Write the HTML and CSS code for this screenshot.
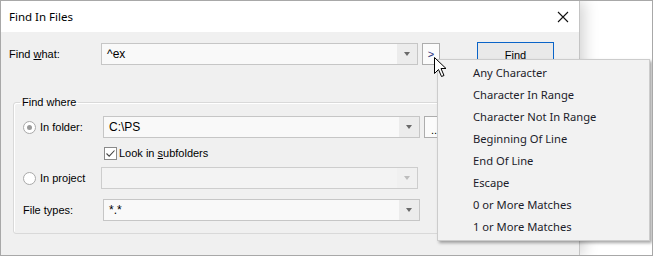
FILE: index.html
```html
<!DOCTYPE html>
<html lang="en">
<head>
    <meta charset="UTF-8">
    <title>Find In Files</title>
    <link rel="stylesheet" href="styles.css">
</head>
<body>
    <div class="screen">
        <div class="dialog">
            <div class="titlebar">
                <span class="title">Find In Files</span>
                <svg class="close" width="12" height="12" viewBox="0 0 12 12">
                    <path d="M1 1 L11 11 M11 1 L1 11" stroke="#111" stroke-width="1.1" fill="none"/>
                </svg>
            </div>

            <div class="content">
                <div class="find-row">
                    <label class="label">Find <u>w</u>hat:</label>
                    <div class="combo">
                        <span class="value">^ex</span>
                        <span class="arrow"></span>
                    </div>
                    <button class="small-btn regex">&gt;</button>
                    <button class="find-btn">Find</button>
                </div>

                <fieldset class="group">
                    <legend>Find where</legend>

                    <div class="row">
                        <span class="radio checked"></span>
                        <span class="row-label">In folder:</span>
                        <div class="combo">
                            <span class="value">C:\PS</span>
                            <span class="arrow"></span>
                        </div>
                        <button class="small-btn dots">...</button>
                    </div>

                    <div class="row check-row">
                        <span class="checkbox">
                            <svg width="11" height="11" viewBox="0 0 11 11">
                                <path d="M1.5 5.5 L4.2 8.2 L9.5 2.5" stroke="#444" stroke-width="1.1" fill="none"/>
                            </svg>
                        </span>
                        <span>Look in <u>s</u>ubfolders</span>
                    </div>

                    <div class="row project-row">
                        <span class="radio"></span>
                        <span class="row-label">In project</span>
                        <div class="combo disabled">
                            <span class="value"></span>
                            <span class="arrow"></span>
                        </div>
                    </div>

                    <div class="row types-row">
                        <span class="row-label plain">File types:</span>
                        <div class="combo">
                            <span class="value">*.*</span>
                            <span class="arrow"></span>
                        </div>
                    </div>
                </fieldset>
            </div>
        </div>

        <ul class="menu">
            <li>Any Character</li>
            <li>Character In Range</li>
            <li>Character Not In Range</li>
            <li>Beginning Of Line</li>
            <li>End Of Line</li>
            <li>Escape</li>
            <li>0 or More Matches</li>
            <li>1 or More Matches</li>
        </ul>

        <svg class="cursor" width="14" height="21" viewBox="0 0 14 21">
            <path d="M0.5 0.5 L0.5 16.5 L4.5 12.5 L7.5 19.5 L10 18.5 L7 11.5 L12 11.5 Z" fill="#fff" stroke="#000" stroke-width="1"/>
        </svg>
    </div>
</body>
</html>
```

FILE: styles.css
```css
* {
    box-sizing: border-box;
}
body {
    margin: 0;
    background: #fff;
    font-family: "Liberation Sans", Arial, sans-serif;
    font-size: 11px;
    color: #000;
}
.screen {
    position: relative;
    width: 653px;
    height: 256px;
    border: 1px solid #a8a8a8;
    background: #fff;
    overflow: hidden;
}
.dialog {
    width: 579px;
    height: 254px;
    border-right: 1px solid #c4c4c4;
    background: #f0f0f0;
    box-shadow: 4px 0 14px rgba(0, 0, 0, 0.18);
    display: flex;
    flex-direction: column;
}
.titlebar {
    height: 31px;
    background: #fff;
    display: flex;
    align-items: center;
    justify-content: space-between;
    padding: 0 10px 0 8px;
}
.title {
    font-family: "Noto Sans", sans-serif;
    font-size: 11.5px;
    color: #000;
}
.content {
    padding: 11px 0 0 0;
}
.find-row {
    display: flex;
    align-items: flex-start;
    padding-left: 8px;
}
.label {
    width: 92px;
    line-height: 22px;
}
.combo {
    width: 317px;
    height: 22px;
    border: 1px solid #c6c6c6;
    background: #f9f9f9;
    display: flex;
    align-items: center;
}
.combo .value {
    flex: 1;
    padding-left: 5px;
    font-size: 12px;
}
.combo .arrow {
    width: 20px;
    height: 20px;
    background: #ececec;
    display: flex;
    align-items: center;
    justify-content: center;
}
.combo .arrow::after {
    content: "";
    border-left: 3.5px solid transparent;
    border-right: 3.5px solid transparent;
    border-top: 4px solid #6a6a6a;
}
.combo.disabled {
    background: #f3f3f3;
    border-color: #cdcdcd;
}
.combo.disabled .arrow {
    background: #f0f0f0;
}
.combo.disabled .arrow::after {
    border-top-color: #bdbdbd;
}
.small-btn {
    width: 18px;
    height: 22px;
    margin-left: 4px;
    border: 1px solid #adadad;
    background: #fbfbfb;
    padding: 0;
    font-family: "Liberation Sans", Arial, sans-serif;
    font-size: 11px;
}
.regex {
    color: #1d2d78;
}
.dots {
    width: 23px;
    line-height: 26px;
}
.find-btn {
    width: 77px;
    height: 25px;
    margin-left: 37px;
    margin-top: -1px;
    border: 1px solid #0a64c8;
    background: #e9e9e9;
    font-family: "Liberation Sans", Arial, sans-serif;
    font-size: 11px;
    color: #000;
    padding: 0;
}
.group {
    margin: 29px 0 0 12px;
    width: 460px;
    padding: 7px 0 12px 9px;
    border: 1px solid #d9d9d9;
    border-radius: 3px;
    box-shadow: inset 1px 1px 0 #fff;
}
.group legend {
    padding: 0 2px;
    margin-left: -3px;
    line-height: 13px;
}
.row {
    display: flex;
    align-items: center;
    height: 22px;
}
.row-label {
    width: 63px;
}
.row-label.plain {
    width: 80px;
}
.radio {
    width: 13px;
    height: 13px;
    border: 1px solid #a9a9a9;
    border-radius: 50%;
    background: #fff;
    margin-right: 4px;
    display: flex;
    align-items: center;
    justify-content: center;
}
.radio.checked::after {
    content: "";
    width: 5px;
    height: 5px;
    border-radius: 50%;
    background: #9a9a9a;
}
.check-row {
    margin-top: 4px;
    padding-left: 81px;
}
.checkbox {
    width: 13px;
    height: 13px;
    border: 1px solid #8a8a8a;
    background: #fff;
    margin-right: 2px;
    margin-top: 1px;
    display: flex;
    align-items: center;
    justify-content: center;
}
.project-row {
    margin-top: 3px;
}
.project-row .combo {
    margin-left: -2px;
}
.types-row {
    margin-top: 10px;
}
.menu {
    position: absolute;
    left: 436px;
    top: 58px;
    width: 213px;
    margin: 0;
    padding: 2px 0;
    list-style: none;
    background: #f2f2f2;
    border: 1px solid #cccccc;
    box-shadow: 2px 2px 3px rgba(0, 0, 0, 0.35);
    font-family: "Noto Sans", sans-serif;
    font-size: 11.2px;
    color: #1c1c2a;
}
.menu li {
    height: 22px;
    line-height: 22px;
    padding-left: 35px;
}
.cursor {
    position: absolute;
    left: 433px;
    top: 56px;
}
```
